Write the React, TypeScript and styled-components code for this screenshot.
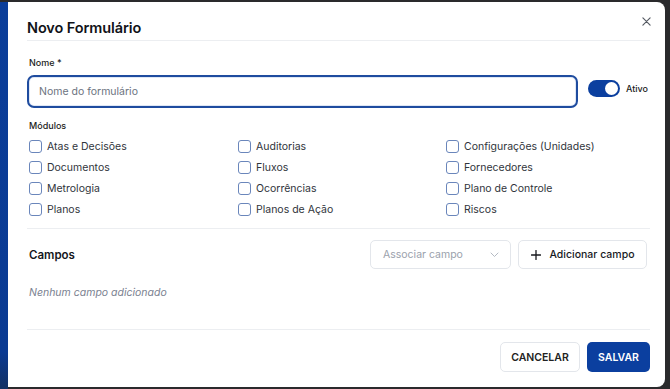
import React from "react";
import styled, { createGlobalStyle } from "styled-components";

const GlobalStyle = createGlobalStyle`
  html, body { margin: 0; padding: 0; }
  body {
    width: 670px;
    height: 389px;
    overflow: hidden;
    background: #2a2a2c;
    font-family: Inter, "Noto Sans", sans-serif;
    -webkit-font-smoothing: antialiased;
  }
  * { box-sizing: border-box; }
`;

const Backdrop = styled.div`
  display: flex;
  width: 670px;
  height: 389px;
  background: #2a2a2c;
`;

const SideStrip = styled.div`
  width: 8px;
  height: 100%;
  background: linear-gradient(180deg, #0b3e9a 0%, #0a3a92 90%, #143060 100%);
  margin-top: 2px;
`;

const Modal = styled.div`
  position: relative;
  margin-top: 2px;
  width: 657px;
  height: 385px;
  background: #ffffff;
  border-radius: 0 8px 8px 0;
  padding: 14px 15px 15px 19px;
  display: flex;
  flex-direction: column;
`;

const Header = styled.div`
  height: 25px;
  border-bottom: 1px solid #eceef1;
  display: flex;
  align-items: flex-start;
`;

const Title = styled.h2`
  margin: 0;
  font-size: 14.5px;
  line-height: 24px;
  font-weight: 600;
  color: #111318;
  letter-spacing: -0.1px;
`;

const CloseButton = styled.button`
  position: absolute;
  top: 12px;
  right: 12px;
  width: 14px;
  height: 14px;
  padding: 0;
  border: none;
  background: transparent;
  display: flex;
  align-items: center;
  justify-content: center;
  color: #555a62;
`;

const FieldLabel = styled.div<{ $top: number }>`
  margin-top: ${(p) => p.$top}px;
  padding-left: 2px;
  font-size: 9px;
  line-height: 14px;
  font-weight: 500;
  color: #1b1d22;
`;

const InputRow = styled.div`
  margin-top: 5px;
  display: flex;
  align-items: center;
`;

const TextInput = styled.input`
  width: 551px;
  height: 33px;
  border: 2px solid #1f4c9f;
  border-radius: 7px;
  box-shadow: inset 0 0 0 1px #dfe7f5;
  padding: 0 10px;
  font-family: inherit;
  font-size: 10.5px;
  color: #222;
  outline: none;
  &::placeholder { color: #6c7380; }
`;

const ToggleGroup = styled.div`
  display: flex;
  align-items: center;
  gap: 6px;
  margin-left: 10px;
  margin-bottom: 6px;
`;

const Track = styled.div<{ $on: boolean }>`
  width: 32px;
  height: 17px;
  border-radius: 9px;
  background: ${(p) => (p.$on ? "#0b3f9f" : "#c9ced6")};
  display: flex;
  align-items: center;
  justify-content: ${(p) => (p.$on ? "flex-end" : "flex-start")};
  padding: 2px;
`;

const Knob = styled.div`
  width: 13px;
  height: 13px;
  border-radius: 50%;
  background: #fff;
`;

const ToggleText = styled.span`
  font-size: 9px;
  font-weight: 500;
  color: #1b1d22;
`;

const ModuleGrid = styled.div`
  margin-top: 3px;
  padding-left: 2px;
  display: grid;
  grid-template-columns: 209px 208px 1fr;
  grid-auto-rows: 21px;
`;

const CheckItem = styled.label`
  display: flex;
  align-items: center;
  gap: 5px;
  font-size: 10.5px;
  color: #30343b;
`;

const Box = styled.span`
  width: 13px;
  height: 13px;
  border: 1.3px solid #6a86bb;
  border-radius: 3px;
  background: #fff;
  flex: none;
`;

const Divider = styled.div<{ $top: number }>`
  margin-top: ${(p) => p.$top}px;
  height: 1px;
  background: #eceef1;
`;

const CamposRow = styled.div`
  margin-top: 11px;
  padding: 0 3px 0 2px;
  display: flex;
  align-items: center;
  height: 29px;
`;

const SectionTitle = styled.div`
  font-size: 11.5px;
  font-weight: 600;
  color: #15171c;
  flex: 1;
`;

const SelectBox = styled.div`
  width: 141px;
  height: 29px;
  border: 1px solid #e3e6eb;
  border-radius: 5px;
  display: flex;
  align-items: center;
  justify-content: space-between;
  padding: 0 11px 0 12px;
  font-size: 10.5px;
  color: #9aa1ac;
`;

const OutlineButton = styled.button<{ $w: number }>`
  width: ${(p) => p.$w}px;
  height: ${(p) => (p.$w > 100 ? 29 : 30)}px;
  margin-left: 7px;
  border: 1px solid #e3e6eb;
  border-radius: 5px;
  background: #fff;
  display: flex;
  align-items: center;
  justify-content: center;
  gap: 9px;
  font-family: inherit;
  font-size: 10.5px;
  font-weight: 500;
  color: #17191e;
  padding: 0;
`;

const EmptyText = styled.div`
  margin-top: 17px;
  padding-left: 2px;
  font-size: 10.5px;
  line-height: 14px;
  font-style: italic;
  color: #7a8190;
`;

const Footer = styled.div`
  margin-top: 12px;
  display: flex;
  justify-content: flex-end;
`;

const PrimaryButton = styled.button`
  width: 63px;
  height: 30px;
  margin-left: 7px;
  border: none;
  border-radius: 5px;
  background: #0b3f9f;
  color: #fff;
  font-family: inherit;
  font-size: 10.5px;
  font-weight: 600;
  padding: 0;
`;

const CancelLabel = styled.span`
  font-weight: 600;
  font-size: 10.5px;
  color: #222;
`;

const modules = [
  "Atas e Decisões",
  "Auditorias",
  "Configurações (Unidades)",
  "Documentos",
  "Fluxos",
  "Fornecedores",
  "Metrologia",
  "Ocorrências",
  "Plano de Controle",
  "Planos",
  "Planos de Ação",
  "Riscos",
];

export default function App() {
  return (
    <>
      <GlobalStyle />
      <Backdrop>
        <SideStrip />
        <Modal>
          <Header>
            <Title>Novo Formulário</Title>
          </Header>
          <CloseButton aria-label="Fechar">
            <svg width="9" height="9" viewBox="0 0 10 10" fill="none">
              <path d="M1 1L9 9M9 1L1 9" stroke="#565b63" strokeWidth="1.3" strokeLinecap="round" />
            </svg>
          </CloseButton>

          <FieldLabel $top={15}>Nome *</FieldLabel>
          <InputRow>
            <TextInput placeholder="Nome do formulário" />
            <ToggleGroup>
              <Track $on>
                <Knob />
              </Track>
              <ToggleText>Ativo</ToggleText>
            </ToggleGroup>
          </InputRow>

          <FieldLabel $top={11}>Módulos</FieldLabel>
          <ModuleGrid>
            {modules.map((m) => (
              <CheckItem key={m}>
                <Box />
                {m}
              </CheckItem>
            ))}
          </ModuleGrid>

          <Divider $top={8} />

          <CamposRow>
            <SectionTitle>Campos</SectionTitle>
            <SelectBox>
              Associar campo
              <svg width="9" height="6" viewBox="0 0 9 6" fill="none">
                <path d="M1 1L4.5 4.5L8 1" stroke="#b4bac3" strokeWidth="1" strokeLinecap="round" strokeLinejoin="round" />
              </svg>
            </SelectBox>
            <OutlineButton $w={129}>
              <svg width="10" height="10" viewBox="0 0 10 10" fill="none">
                <path d="M5 0.5V9.5M0.5 5H9.5" stroke="#17191e" strokeWidth="1.3" strokeLinecap="round" />
              </svg>
              Adicionar campo
            </OutlineButton>
          </CamposRow>

          <EmptyText>Nenhum campo adicionado</EmptyText>

          <Divider $top={29} />

          <Footer>
            <OutlineButton $w={80}>
              <CancelLabel>CANCELAR</CancelLabel>
            </OutlineButton>
            <PrimaryButton>SALVAR</PrimaryButton>
          </Footer>
        </Modal>
      </Backdrop>
    </>
  );
}
